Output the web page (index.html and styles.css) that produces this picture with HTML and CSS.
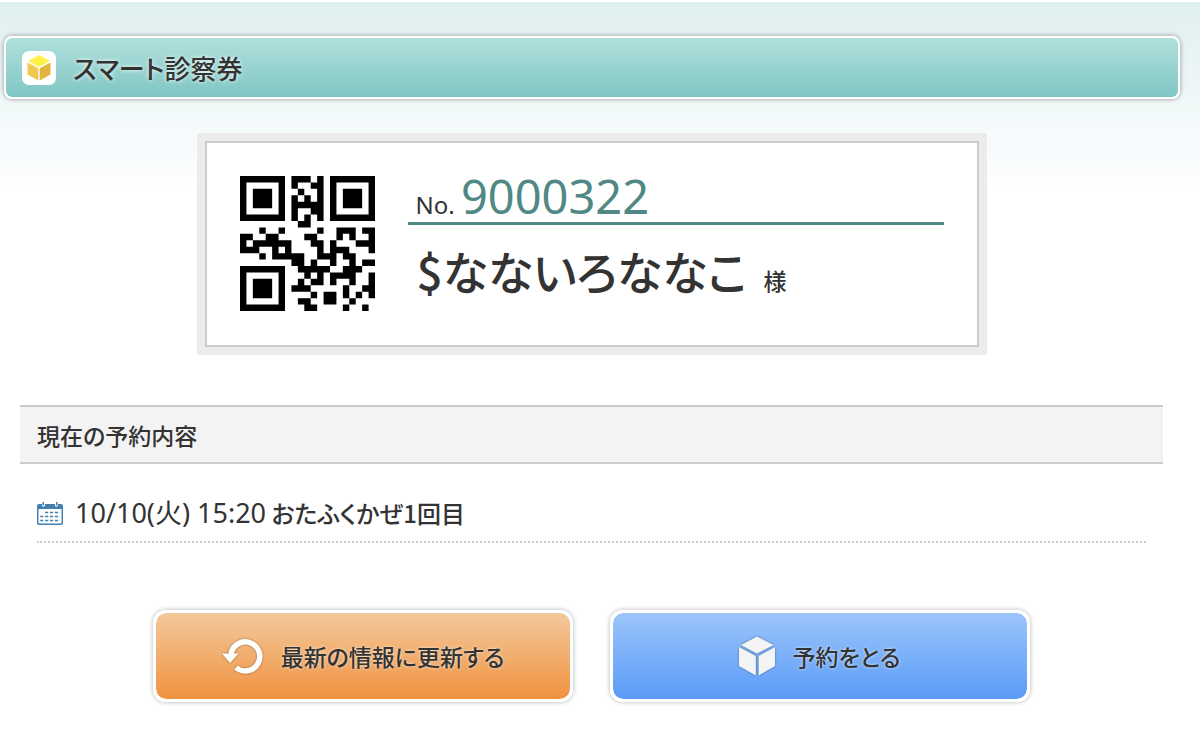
FILE: index.html
```html
<!DOCTYPE html>
<html lang="ja">
<head>
  <meta charset="UTF-8">
  <meta name="viewport" content="width=device-width, initial-scale=1.0">
  <title>スマート診察券</title>
  <link rel="stylesheet" href="styles.css">
</head>
<body>
  <header class="page-header">
    <span class="header-icon">
      <svg viewBox="0 0 24 26" width="24" height="26" aria-hidden="true">
        <path fill="#fff04a" d="M12 0 23 6 12 12 1 6z"/>
        <path fill="#f0c850" d="M0.500 7.500 11.300 13.200V25.600L0.500 19.500z"/>
        <path fill="#e3b43a" d="M23.500 7.500 12.700 13.200V25.600L23.500 19.500z"/>
      </svg>
    </span>
    <h1>スマート診察券</h1>
  </header>

  <main>
    <!-- 診察券カード -->
    <section class="card">
      <svg class="qr" id="qr" data-number="9000322" viewBox="0 0 21 21" role="img" aria-label="QRコード"></svg>
      <div class="card-info">
        <p class="card-no">No. <span>9000322</span></p>
        <p class="card-name">$なないろななこ <span>様</span></p>
      </div>
    </section>

    <!-- 予約内容 -->
    <h2>現在の予約内容</h2>
    <ul class="reserve-list">
      <li>
        <svg viewBox="0 0 26 23" width="26" height="23" aria-hidden="true">
          <path fill="#4380b0" d="M2 2h3v2q1 1.500 3 0V2h10v2q1 1.500 3 0V2h3q2 0 2 2v17q0 2-2 2H2q-2 0-2-2V4q0-2 2-2z"/>
          <path fill="#4380b0" d="M5.500 0h1.500v3.500H5.500zM19 0h1.500v3.500H19z"/>
          <path fill="#fff" d="M1.500 7h23v13.500q0 1-1 1h-21q-1 0-1-1z"/>
          <path stroke="#4380b0" stroke-width="1.600" stroke-dasharray="3.200 1.700" d="M8 10.500h15M3.200 14.500H23M3.200 18.500H23"/>
        </svg>
        <p><time>10/10(火) 15:20</time> おたふくかぜ1回目</p>
      </li>
    </ul>

    <div class="buttons">
      <button type="button" class="btn btn-orange">
        <svg viewBox="0 0 42 36" width="42" height="36" aria-hidden="true">
          <path fill="none" stroke="#fff" stroke-width="5.500" d="M9 16A14.500 14.500 0 1 1 14 29.500"/>
          <path fill="#fff" d="M0 15.500H16.500L8 25z"/>
        </svg>
        最新の情報に更新する
      </button>
      <button type="button" class="btn btn-blue">
        <svg viewBox="0 0 36 40" width="36" height="40" aria-hidden="true">
          <path fill="#f4f4f4" d="M18 0.500 34.500 9 18 17.500 2 9z"/>
          <path fill="#f4f4f4" d="M0 11 16.800 20V39.500L0 30z"/>
          <path fill="#f4f4f4" d="M36 11 19.600 20V39.500L36 30z"/>
        </svg>
        予約をとる
      </button>
    </div>
  </main>

  <script src="qr.js"></script>
</body>
</html>
```

FILE: styles.css
```css
* {
  margin: 0;
  padding: 0;
  box-sizing: border-box;
}
body {
  padding: 36px 20px 40px 4px;
  font-family: "Noto Sans CJK JP", sans-serif;
  font-size: 24px;
  font-weight: 500;
  font-feature-settings: "palt";
  line-height: 32px;
  color: #333;
  background: #fff linear-gradient(#e0f0f1, #e6f2f3 40px, #f2f9f9 108px, #f8fbfd 150px, #fff 190px) no-repeat 0 2px;
}
main {
  padding: 0 17px 0 16px;
}

/* ヘッダー */
.page-header {
  display: flex;
  align-items: center;
  gap: 17px;
  height: 63px;
  padding: 0 16px;
  border: 2px solid #fff;
  border-radius: 8px;
  background: linear-gradient(#b0e0dd, #80c6c3) padding-box;
  box-shadow: 0 0 5px rgba(0, 0, 0, 0.4);
}
.header-icon {
  display: flex;
  align-items: center;
  justify-content: center;
  width: 34px;
  height: 34px;
  border-radius: 7px;
  background: #fff;
}
h1 {
  font-size: 26px;
  font-weight: 500;
  text-shadow: 0 0 4px #fff;
}

/* 診察券カード */
.card {
  display: flex;
  gap: 33px;
  max-width: 774px;
  margin: 42px auto 58px;
  padding: 33px 33px 34px;
  border: 2px solid #ccc;
  outline: 8px solid #ececec;
  background: #fff;
}
.qr {
  width: 135px;
  height: 135px;
  flex: none;
}
.card-info {
  flex: 1;
}
.card-no {
  padding: 0 0 5px 8px;
  border-bottom: 3px solid #4f8885;
  font-family: "Noto Sans", "Noto Sans CJK JP", sans-serif;
  font-weight: 400;
  line-height: 24px;
}
.card-no span {
  font-size: 47px;
  line-height: 40px;
  color: #4f8885;
}
.card-name {
  padding: 15px 0 0 9px;
  font-size: 46px;
  line-height: 60px;
}
.card-name span {
  margin-left: 6px;
  font-size: 23px;
}

/* 予約内容 */
h2 {
  padding: 12px 17px 11px;
  border-top: 2px solid #ccc;
  border-bottom: 2px solid #ccc;
  background: #f3f3f3;
  font-size: 23px;
  font-weight: 500;
}
.reserve-list {
  padding: 33px 17px 0;
  list-style: none;
}
.reserve-list li {
  display: flex;
  align-items: center;
  gap: 12px;
  padding-bottom: 12px;
  border-bottom: 2px dotted #ccc;
}
.reserve-list time {
  font-family: "Noto Sans", "Noto Sans CJK JP", sans-serif;
  font-size: 27px;
  font-weight: 400;
}

/* ボタン */
.buttons {
  display: flex;
  justify-content: center;
  gap: 37px;
  margin-top: 67px;
}
.btn {
  display: flex;
  align-items: center;
  justify-content: center;
  gap: 17px;
  width: 420px;
  height: 92px;
  border: 3px solid #fff;
  border-radius: 13px;
  font: inherit;
  font-size: 23px;
  font-feature-settings: "palt";
  color: #333;
  text-shadow: 0 0 3px rgba(255, 255, 255, 0.8);
  box-shadow: 0 0 5px rgba(0, 0, 0, 0.3);
  cursor: pointer;
}
.btn svg {
  filter: drop-shadow(0 0 1px rgba(0, 0, 0, 0.4));
}
.btn-orange {
  background: linear-gradient(#f3c99c, #f0923f) padding-box;
}
.btn-blue {
  background: linear-gradient(#9cc5fa, #5a9bf8) padding-box;
}

@media (max-width: 800px) {
  .card,
  .buttons {
    flex-direction: column;
    align-items: center;
  }
  .btn {
    width: 100%;
  }
}
```

FILE: qr.js
```js
// 診察券番号のQRコード(バージョン1、誤り訂正レベルH、マスク7)
const SIZE = 21;
const EC_LENGTH = 17;
const FORMAT = "000100000111011";

function gfMul(a, b) {
  let r = 0;
  for (; b; b >>= 1) {
    if (b & 1) r ^= a;
    a <<= 1;
    if (a & 256) a ^= 0x11d;
  }
  return r;
}

function getCodewords(text) {
  let bits = "0100" + text.length.toString(2).padStart(8, "0");
  for (const ch of text) bits += ch.charCodeAt(0).toString(2).padStart(8, "0");
  bits += "0000";
  const data = bits.match(/.{8}/g).map(b => parseInt(b, 2));

  // 生成多項式
  let gen = [1];
  for (let i = 0, root = 1; i < EC_LENGTH; i++, root = gfMul(root, 2)) {
    const next = gen.concat(0);
    gen.forEach((g, j) => { next[j + 1] ^= gfMul(g, root); });
    gen = next;
  }
  const rest = data.concat(Array(EC_LENGTH).fill(0));
  for (let i = 0; i < data.length; i++) {
    const head = rest[i];
    gen.forEach((g, j) => { rest[i + j] ^= gfMul(g, head); });
  }
  return data.concat(rest.slice(data.length));
}

function makeQr(text) {
  const m = Array.from({ length: SIZE }, () => Array(SIZE).fill(null));

  // 位置検出パターン
  [[0, 0], [0, 14], [14, 0]].forEach(([top, left]) => {
    for (let r = -1; r < 8; r++) {
      for (let c = -1; c < 8; c++) {
        if (!m[top + r] || m[top + r][left + c] === undefined) continue;
        const d = Math.max(Math.abs(r - 3), Math.abs(c - 3));
        m[top + r][left + c] = d === 4 || d === 2 ? 0 : 1;
      }
    }
  });
  for (let i = 8; i < 13; i++) {
    m[6][i] = m[i][6] = i % 2 ? 0 : 1;
  }

  // 形式情報
  const pos = [0, 1, 2, 3, 4, 5, 7, 8];
  for (let i = 0; i < 8; i++) m[8][pos[i]] = +FORMAT[i];
  for (let i = 8; i < 15; i++) m[[7, 5, 4, 3, 2, 1, 0][i - 8]][8] = +FORMAT[i];
  for (let i = 0; i < 7; i++) m[20 - i][8] = +FORMAT[i];
  for (let i = 7; i < 15; i++) m[8][6 + i] = +FORMAT[i];
  m[13][8] = 1;

  const bits = getCodewords(text).map(b => b.toString(2).padStart(8, "0")).join("");
  let n = 0;
  let up = true;
  for (let right = 20; right > 0; right -= 2) {
    if (right === 6) right = 5;
    for (let i = 0; i < SIZE; i++) {
      const r = up ? 20 - i : i;
      for (const c of [right, right - 1]) {
        if (m[r][c] !== null) continue;
        const flip = ((r + c) % 2 + (r * c) % 3) % 2 === 0 ? 1 : 0;
        m[r][c] = +bits[n++] ^ flip;
      }
    }
    up = !up;
  }
  return m;
}

const svg = document.getElementById("qr");
let d = "";
makeQr(svg.dataset.number).forEach((row, r) => {
  row.forEach((on, c) => {
    if (on) d += `M${c} ${r}h1v1h-1z`;
  });
});
const path = document.createElementNS("http://www.w3.org/2000/svg", "path");
path.setAttribute("d", d);
svg.appendChild(path);
```
